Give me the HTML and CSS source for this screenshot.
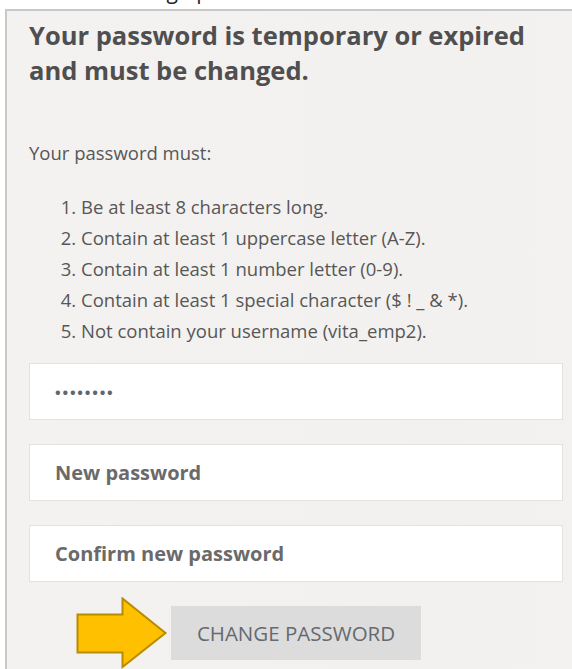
FILE: index.html
```html
<!DOCTYPE html>
<html lang="en">
<head>
<meta charset="utf-8">
<title>Change password</title>
<link rel="stylesheet" href="styles.css">
</head>
<body>
  <div class="page-title"><p>Setting up</p></div>

  <section class="panel">
    <h1 class="panel-heading">Your password is temporary or expired and must be changed.</h1>

    <p class="rules-intro">Your password must:</p>
    <ol class="rules">
      <li>Be at least 8 characters long.</li>
      <li>Contain at least 1 uppercase letter (A-Z).</li>
      <li>Contain at least 1 number letter (0-9).</li>
      <li>Contain at least 1 special character ($ ! _ &amp; *).</li>
      <li>Not contain your username (vita_emp2).</li>
    </ol>

    <form class="pw-form">
      <input class="field field-current" type="password" value="tempPass" aria-label="Current password">
      <input class="field" type="password" placeholder="New password">
      <input class="field" type="password" placeholder="Confirm new password">
      <div class="actions">
        <svg class="pointer" width="92" height="72" viewBox="0 0 92 72" aria-hidden="true">
          <path d="M1.5 17.5 H46.5 V1.5 L89.5 36 L46.5 70 V55.5 H1.5 Z" fill="#ffc000" stroke="#b98b00" stroke-width="2" stroke-linejoin="miter"/>
        </svg>
        <button class="btn" type="button">CHANGE PASSWORD</button>
      </div>
    </form>
  </section>
</body>
</html>
```

FILE: styles.css
```css
html, body {
  margin: 0;
  padding: 0;
  background: #ffffff;
}

body {
  font-family: "Open Sans", "Noto Sans", sans-serif;
  color: #555555;
  width: 572px;
  height: 669px;
  overflow: hidden;
}

/* page title line, mostly scrolled off the top */
.page-title {
  height: 9px;
  overflow: hidden;
}

.page-title p {
  margin: -21px 0 0 110px;
  font-size: 21px;
  line-height: 24px;
  color: #222222;
}

.panel {
  margin-left: 5px;
  border-top: 2px solid #c8c8c8;
  border-left: 2px solid #c8c8c8;
  background: linear-gradient(90deg, #f3f2f0 0%, #f3f1ef 60%, #f4f2f0 100%);
  padding: 7px 0 40px 22px;
  width: 700px;
}

.panel-heading {
  margin: 0;
  width: 515px;
  font-size: 25.5px;
  line-height: 35px;
  font-weight: 700;
  color: #4f4f4f;
}

.rules-intro {
  margin: 52px 0 0 0;
  font-size: 18.5px;
  line-height: 26px;
  color: #575757;
}

.rules {
  margin: 25px 0 0 0;
  padding-left: 52px;
  font-size: 18.5px;
  line-height: 31px;
  color: #575757;
}

.pw-form {
  display: flex;
  flex-direction: column;
  gap: 24px;
  margin-top: 17px;
  width: 534px;
}

.field {
  box-sizing: border-box;
  width: 534px;
  height: 57px;
  margin: 0;
  padding: 0 0 0 25px;
  border: 1px solid #e2e2e0;
  background: #ffffff;
  font-family: "Open Sans", "Noto Sans", sans-serif;
  font-size: 20px;
  font-weight: 700;
  color: #5f6670;
  outline: none;
}

.field-current {
  font-size: 15px;
  letter-spacing: 1.8px;
}

.field::placeholder {
  color: #6a6a6a;
  font-weight: 700;
  opacity: 1;
}

.actions {
  position: relative;
  padding-left: 142px;
}

.btn {
  width: 250px;
  height: 54px;
  border: none;
  background: #dcdcdc;
  font-family: "Open Sans", "Noto Sans", sans-serif;
  font-size: 20.5px;
  color: #646a70;
  cursor: pointer;
}

/* callout arrow pointing at the button */
.pointer {
  position: absolute;
  left: 47px;
  top: -9px;
}
```
